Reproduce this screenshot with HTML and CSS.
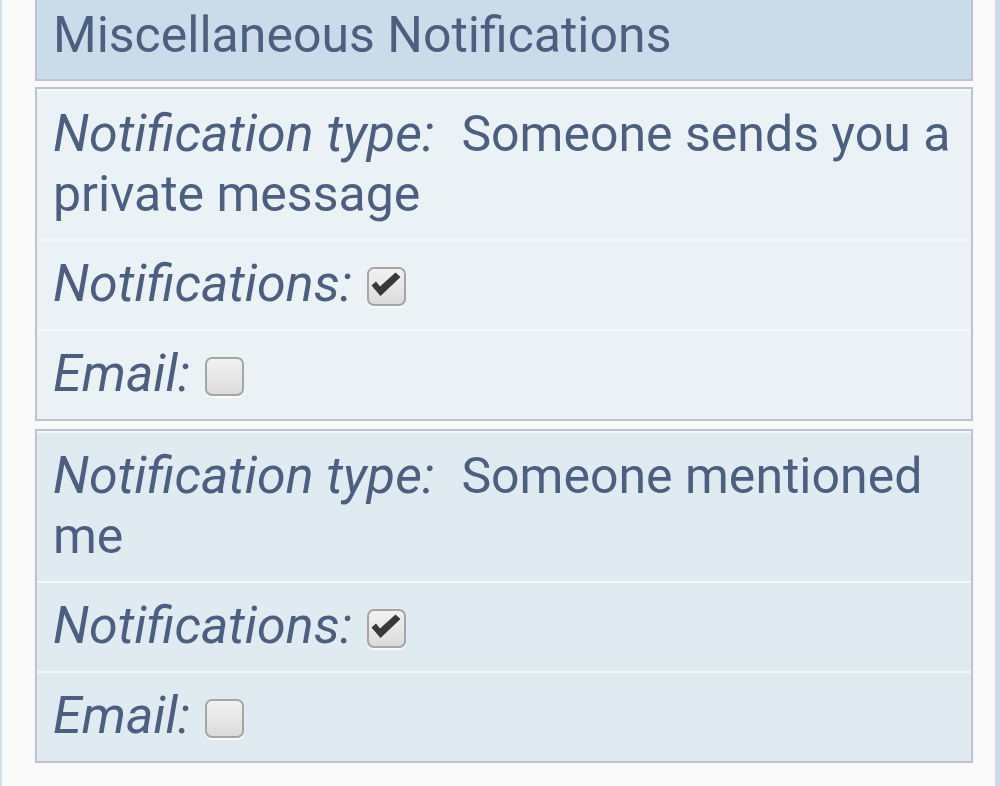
FILE: index.html
```html
<!DOCTYPE html>
<html>
<head>
<meta charset="utf-8">
<link rel="stylesheet" href="styles.css">
</head>
<body>
<div class="page">
  <div class="section-head">Miscellaneous Notifications</div>

  <div class="card card-light">
    <div class="row"><span class="label">Notification type:</span><span class="value">Someone sends you a private message</span></div>
    <div class="row"><span class="label">Notifications:</span> <span class="cb"><svg viewBox="0 0 38 38" width="38" height="38"><path d="M4.5 18.5 L9 14.5 L13 19.5 L28.5 5.5 L33.5 10 L13.5 29 Z" fill="#383838"/></svg></span></div>
    <div class="row"><span class="label">Email:</span> <span class="cb"></span></div>
  </div>

  <div class="card card-dark">
    <div class="row"><span class="label">Notification type:</span><span class="value">Someone mentioned me</span></div>
    <div class="row"><span class="label">Notifications:</span> <span class="cb"><svg viewBox="0 0 38 38" width="38" height="38"><path d="M4.5 18.5 L9 14.5 L13 19.5 L28.5 5.5 L33.5 10 L13.5 29 Z" fill="#383838"/></svg></span></div>
    <div class="row"><span class="label">Email:</span> <span class="cb"></span></div>
  </div>
</div>
</body>
</html>
```
FILE: styles.css
```css
html, body {
  margin: 0;
  padding: 0;
}
body {
  background: #f9f9f9;
  font-family: Roboto, "Noto Sans", sans-serif;
  color: #4c5f80;
  width: 1000px;
  height: 786px;
  overflow: hidden;
  box-sizing: border-box;
  border-left: 2px solid #cfdfec;
  border-right: 5px solid #cadbea;
}
.page {
  margin: -12px 22px 0 33px;
  display: flex;
  flex-direction: column;
  gap: 6px;
}
.section-head {
  background: #cadbea;
  border: 2px solid #bfc1d1;
  padding: 15px 16px 14px;
  font-size: 50px;
  line-height: 60px;
}
.card {
  border: 2px solid #bfc1d1;
  display: flex;
  flex-direction: column;
}
.card + .card {
  margin-top: 2px;
}
.card-light { background: #ebf2f6; }
.card-dark { background: #e0eaf1; }
.row {
  padding: 13px 16px 15px;
  font-size: 50px;
  line-height: 60px;
  border-top: 2px solid #f4f8fb;
}
.label {
  font-style: italic;
  font-size: 52px;
}
.value {
  margin-left: 27px;
}
.cb {
  display: inline-block;
  box-sizing: border-box;
  width: 39px;
  height: 39px;
  margin-left: 2px;
  border: 2px solid #a5a5a5;
  border-radius: 7px;
  background: linear-gradient(#f2f2f2, #dbdbdb);
  box-shadow: 0 2px 1px rgba(255,255,255,0.8);
  vertical-align: -5px;
  position: relative;
}
.cb svg {
  position: absolute;
  left: -2px;
  top: -2px;
}
```
